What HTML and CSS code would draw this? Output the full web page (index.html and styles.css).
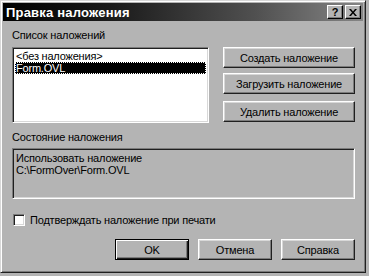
FILE: index.html
```html
<!DOCTYPE html>
<html>
<head>
<meta charset="utf-8">
<link rel="stylesheet" href="styles.css">
</head>
<body>
<div class="window">
  <div class="titlebar">
    <span class="title">Правка наложения</span>
    <div class="tbtns">
      <span class="tbtn">?</span>
      <span class="tbtn x">
        <svg width="8" height="7" viewBox="0 0 8 7"><path d="M0 0h2l2 2.5L6 0h2L5 3.5 8 7H6L4 4.5 2 7H0l3-3.5z" fill="#000"/></svg>
      </span>
    </div>
  </div>
  <div class="content">
    <div class="top">
      <div class="left">
        <div class="label">Список наложений</div>
        <div class="list">
          <div class="item">&lt;без наложения&gt;</div>
          <div class="item sel">Form.OVL</div>
        </div>
      </div>
      <div class="right">
        <button class="btn b1">Создать наложение</button>
        <button class="btn b2">Загрузить наложение</button>
        <button class="btn b3">Удалить наложение</button>
      </div>
    </div>
    <div class="label status-label">Состояние наложения</div>
    <div class="status">
      <div>Использовать наложение</div>
      <div>C:\FormOver\Form.OVL</div>
    </div>
    <label class="check"><span class="box"></span>Подтверждать наложение при печати</label>
    <div class="bottom">
      <button class="btn bb def">OK</button>
      <button class="btn bb">Отмена</button>
      <button class="btn bb">Справка</button>
    </div>
  </div>
</div>
</body>
</html>
```
FILE: styles.css
```css
html, body { margin: 0; padding: 0; background: #b4b4b4; }
body { width: 369px; height: 276px; overflow: hidden; font-family: "Liberation Sans", Arial, sans-serif; font-size: 11px; letter-spacing: -0.2px; color: #000; }
.window {
  box-sizing: border-box; width: 366px; height: 273px;
  background: #b4b4b4;
  border: 1px solid; border-color: #d8d8d8 #202020 #202020 #d8d8d8;
  box-shadow: inset 1px 1px #fff, inset -1px -1px #7c7c7c;
  padding: 2px;
}
.titlebar {
  height: 18px; display: flex; align-items: center; justify-content: space-between;
  background: linear-gradient(to right, #000 0%, #1a1a1a 30%, #505050 70%, #858585 100%);
}
.title { color: #fff; font-weight: bold; font-size: 13px; padding-left: 3px; letter-spacing: 0.2px; }
.tbtns { display: flex; gap: 2px; padding-right: 2px; }
.tbtn {
  box-sizing: border-box; width: 16px; height: 14px; background: #b4b4b4;
  display: flex; align-items: center; justify-content: center;
  font-weight: bold; font-size: 11px; line-height: 1; letter-spacing: 0;
  border: 1px solid; border-color: #fff #000 #000 #fff;
  box-shadow: inset -1px -1px #7c7c7c;
}
.content { padding: 7px 8px 0 9px; }
.top { display: flex; gap: 14px; }
.left { width: 197px; }
.label { height: 14px; line-height: 14px; }
.list {
  box-sizing: border-box; margin-top: 5px; height: 76px; background: #fff;
  border: 1px solid; border-color: #7c7c7c #fff #fff #7c7c7c;
  box-shadow: inset 1px 1px #202020, inset -1px -1px #d8d8d8;
  padding: 2px;
}
.item { height: 12px; line-height: 12px; padding-left: 1px; }
.item.sel { background: #000; color: #fff; outline: 1px dotted #fff; outline-offset: -1px; }
.right { width: 132px; display: flex; flex-direction: column; padding-top: 19px; }
.btn {
  box-sizing: border-box; height: 21px; background: #b4b4b4; font: inherit; letter-spacing: inherit; color: #000;
  border: 1px solid; border-color: #fff #202020 #202020 #fff;
  box-shadow: inset -1px -1px #7c7c7c, inset 1px 1px #d8d8d8;
  padding: 0; margin: 0;
}
.b2 { margin-top: 5px; }
.b3 { margin-top: 7px; }
.status-label { margin-top: 7px; }
.status {
  box-sizing: border-box; margin-top: 4px; height: 51px;
  border: 1px solid; border-color: #7c7c7c #fff #fff #7c7c7c;
  box-shadow: inset 1px 1px #202020, inset -1px -1px #d8d8d8;
  padding: 3px 3px; line-height: 12px;
}
.check { display: flex; align-items: center; gap: 5px; margin-top: 14px; height: 13px; }
.box {
  box-sizing: border-box; width: 12px; height: 12px; background: #fff; margin-left: 1px;
  border: 1px solid; border-color: #7c7c7c #fff #fff #7c7c7c;
  box-shadow: inset 1px 1px #202020, inset -1px -1px #d8d8d8;
}
.bottom { display: flex; justify-content: flex-end; gap: 9px; margin-top: 13px; }
.bb { width: 74px; }
.def { border: 1px solid #000; box-shadow: inset 1px 1px #fff, inset -1px -1px #202020, inset -2px -2px #7c7c7c; }
```
